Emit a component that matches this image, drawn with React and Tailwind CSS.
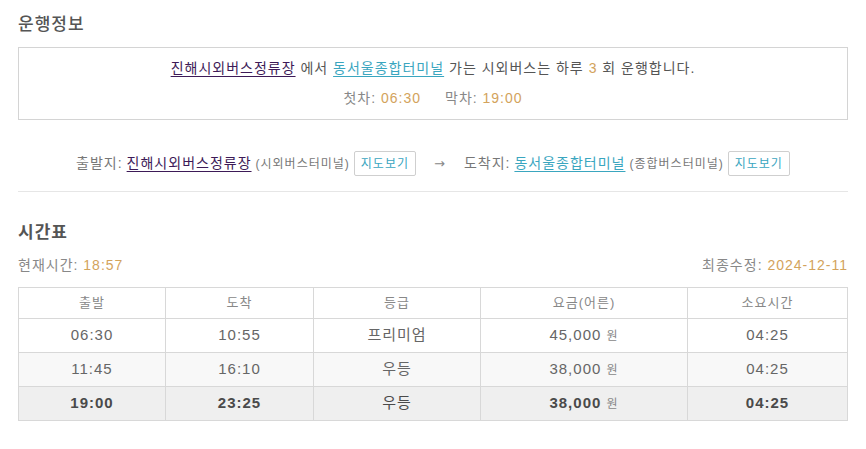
import React from 'react'

const font = { fontFamily: '"Liberation Sans", "Noto Sans CJK KR", sans-serif' }

const rows = [
  { dep: '06:30', arr: '10:55', grade: '프리미엄', fare: '45,000', dur: '04:25', bg: 'bg-white' },
  { dep: '11:45', arr: '16:10', grade: '우등', fare: '38,000', dur: '04:25', bg: 'bg-[#f8f8f8]' },
  { dep: '19:00', arr: '23:25', grade: '우등', fare: '38,000', dur: '04:25', bg: 'bg-[#efefef]', bold: true },
]

const MapButton = () => (
  <button className="h-[25px] px-[6px] border border-[#cfcfcf] rounded-[2px] bg-white text-[12px] text-[#3aa6bf] leading-none">
    지도보기
  </button>
)

const App = () => {
  return (
    <div className="w-[866px] h-[449px] bg-white px-[18px] pt-[14px] tracking-[1px]" style={font}>
      {/* 운행정보 */}
      <h2 className="h-[22px] leading-[22px] text-[17px] font-medium text-[#555]">운행정보</h2>
      <div className="mt-[11px] border border-[#d4d4d4] pt-[9px] pb-[10px] text-center text-[14px] text-[#555]">
        <p className="h-[22px] leading-[22px]">
          <a className="text-[#3d1a57] underline underline-offset-[3px]">진해시외버스정류장</a> 에서{' '}
          <a className="text-[#3aa6bf] underline underline-offset-[3px]">동서울종합터미널</a> 가는 시외버스는 하루{' '}
          <span className="text-[#d3a35c]">3</span> 회 운행합니다.
        </p>
        <p className="mt-[8px] h-[22px] leading-[22px] text-[#888]">
          첫차: <span className="text-[#d3a35c]">06:30</span>
          <span className="inline-block w-[24px]" />
          막차: <span className="text-[#d3a35c]">19:00</span>
        </p>
      </div>

      {/* 출발지 / 도착지 */}
      <div className="mt-[31px] pb-[15px] border-b border-[#e6e6e6] flex items-center justify-center text-[14px] text-[#777]">
        <span>출발지:</span>
        <a className="ml-[4px] text-[#3d1a57] underline underline-offset-[3px]">진해시외버스정류장</a>
        <span className="ml-[4px] text-[12px] text-[#777]">(시외버스터미널)</span>
        <span className="ml-[4px]"><MapButton /></span>
        <span className="mx-[18px] font-['DejaVu_Sans'] text-[13px] text-[#888]">→</span>
        <span>도착지:</span>
        <a className="ml-[4px] text-[#3aa6bf] underline underline-offset-[3px]">동서울종합터미널</a>
        <span className="ml-[4px] text-[12px] text-[#777]">(종합버스터미널)</span>
        <span className="ml-[4px]"><MapButton /></span>
      </div>

      {/* 시간표 */}
      <h2 className="mt-[30px] h-[22px] leading-[22px] text-[17px] font-bold text-[#555]">시간표</h2>
      <div className="mt-[11px] h-[20px] leading-[20px] flex justify-between text-[14px] text-[#888]">
        <span>
          현재시간: <span className="text-[#d3a35c]">18:57</span>
        </span>
        <span>
          최종수정: <span className="text-[#d3a35c]">2024-12-11</span>
        </span>
      </div>

      <table className="mt-[12px] w-full border-collapse border border-[#d8d8d8] text-center">
        <colgroup>
          <col className="w-[147px]" />
          <col className="w-[148px]" />
          <col className="w-[167px]" />
          <col className="w-[207px]" />
          <col />
        </colgroup>
        <thead>
          <tr className="h-[31px] bg-white text-[13px] text-[#888]">
            <th className="font-normal border border-[#d8d8d8]">출발</th>
            <th className="font-normal border border-[#d8d8d8]">도착</th>
            <th className="font-normal border border-[#d8d8d8]">등급</th>
            <th className="font-normal border border-[#d8d8d8]">요금(어른)</th>
            <th className="font-normal border border-[#d8d8d8]">소요시간</th>
          </tr>
        </thead>
        <tbody>
          {rows.map((r) => (
            <tr
              key={r.dep}
              className={`h-[34px] text-[15px] ${r.bg} ${r.bold ? 'font-bold text-[#4a4a4a]' : 'text-[#666]'}`}
            >
              <td className="border border-[#d8d8d8]">{r.dep}</td>
              <td className="border border-[#d8d8d8]">{r.arr}</td>
              <td className={`border border-[#d8d8d8] ${r.bold ? 'font-normal' : ''}`}>{r.grade}</td>
              <td className="border border-[#d8d8d8]">
                {r.fare} <span className="text-[12px] font-normal text-[#888]">원</span>
              </td>
              <td className="border border-[#d8d8d8]">{r.dur}</td>
            </tr>
          ))}
        </tbody>
      </table>
    </div>
  )
}

export default App
